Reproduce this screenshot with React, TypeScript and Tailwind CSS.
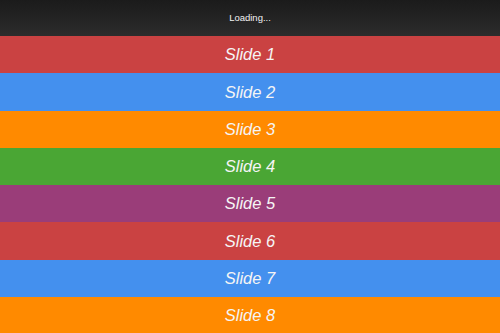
const slides = [
  { label: "Slide 1", color: "bg-[#ca4242]" },
  { label: "Slide 2", color: "bg-[#4490ee]" },
  { label: "Slide 3", color: "bg-[#ff8a00]" },
  { label: "Slide 4", color: "bg-[#4aa634]" },
  { label: "Slide 5", color: "bg-[#9a3d79]" },
  { label: "Slide 6", color: "bg-[#ca4242]" },
  { label: "Slide 7", color: "bg-[#4490ee]" },
  { label: "Slide 8", color: "bg-[#ff8a00]" },
];

export default function App() {
  return (
    <div className="h-[333px] w-[500px] overflow-hidden font-['Liberation_Sans',Arial,sans-serif]">
      {/* Header */}
      <div className="flex h-[36px] items-center justify-center bg-gradient-to-b from-[#1b1b1b] to-[#2c2c2c] text-[9.5px] text-[#f2f2f2]">
        Loading...
      </div>

      {/* Slides */}
      {slides.map((s) => (
        <div
          key={s.label}
          className={`flex h-[37.3px] shrink-0 items-center justify-center ${s.color} text-[16.5px] italic text-[#f5f5f5]`}
        >
          {s.label}
        </div>
      ))}
    </div>
  );
}
